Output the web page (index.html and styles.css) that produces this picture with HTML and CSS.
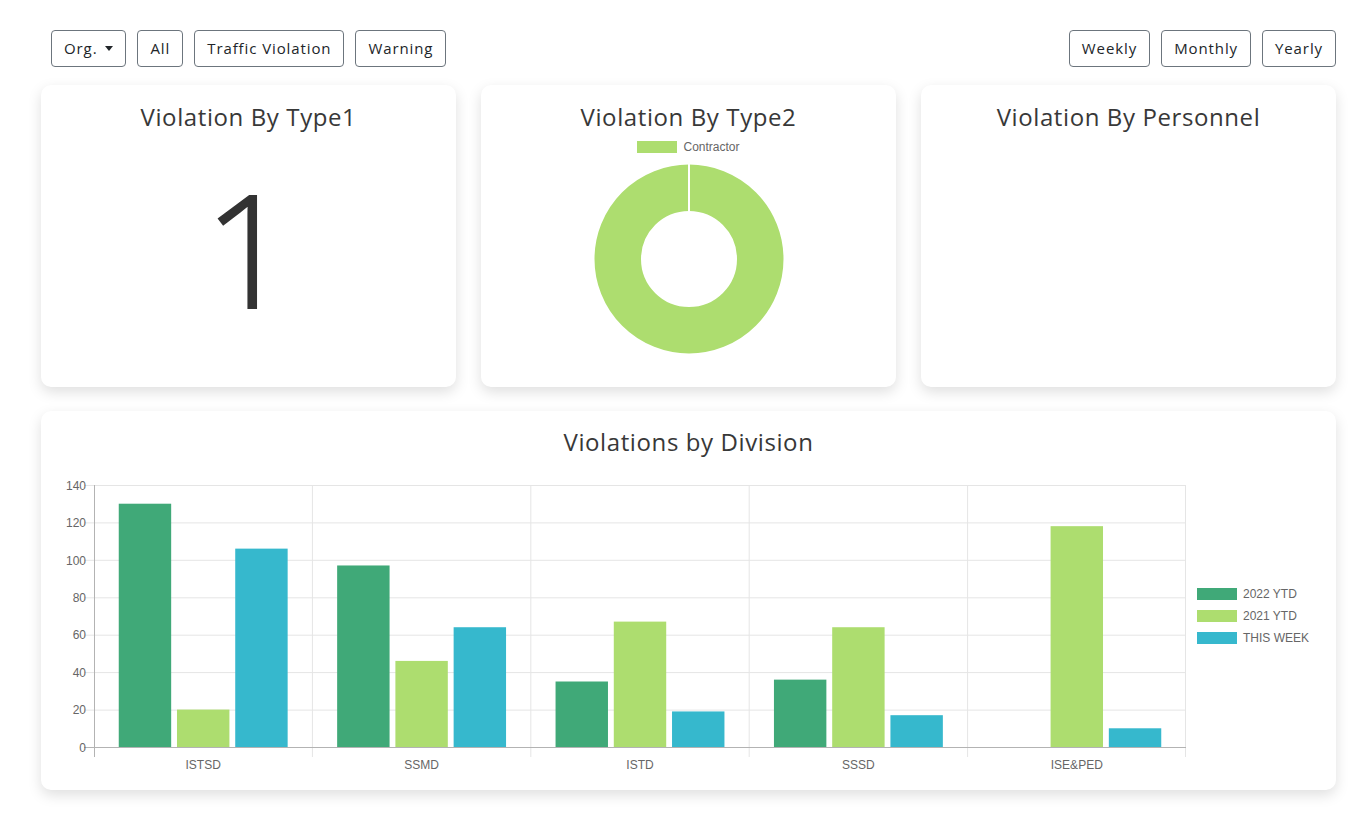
FILE: index.html
```html
<!DOCTYPE html>
<html lang="en">
<head>
<meta charset="utf-8">
<title>Violations Dashboard</title>
<link rel="stylesheet" href="styles.css">
</head>
<body>
<div class="page">
  <div class="toolbar">
    <div class="btn-group">
      <button class="btn dropdown">Org.<span class="caret"></span></button>
      <button class="btn">All</button>
      <button class="btn">Traffic Violation</button>
      <button class="btn">Warning</button>
    </div>
    <div class="btn-group">
      <button class="btn">Weekly</button>
      <button class="btn">Monthly</button>
      <button class="btn">Yearly</button>
    </div>
  </div>

  <div class="cards">
    <div class="card">
      <h2 class="card-title">Violation By Type1</h2>
      <div class="big-number">1</div>
    </div>
    <div class="card">
      <h2 class="card-title">Violation By Type2</h2>
      <div class="donut-legend"><span class="legend-box light"></span><span class="legend-text">Contractor</span></div>
      <svg class="donut" width="190" height="190" viewBox="0 0 190 190">
        <circle cx="95" cy="95" r="71.25" fill="none" stroke="#addd6f" stroke-width="46.5"/>
        <line x1="95" y1="0" x2="95" y2="48" stroke="#ffffff" stroke-width="2"/>
      </svg>
    </div>
    <div class="card">
      <h2 class="card-title">Violation By Personnel</h2>
    </div>
  </div>

  <div class="card wide">
    <h2 class="card-title">Violations by Division</h2>
    <svg class="bar-chart" width="1295" height="305" viewBox="0 0 1295 305">
      <g class="grid" stroke="#e5e5e5" stroke-width="1">
        <line x1="43" y1="15.5" x2="1145" y2="15.5"/>
        <line x1="43" y1="52.9" x2="1145" y2="52.9"/>
        <line x1="43" y1="90.3" x2="1145" y2="90.3"/>
        <line x1="43" y1="127.8" x2="1145" y2="127.8"/>
        <line x1="43" y1="165.2" x2="1145" y2="165.2"/>
        <line x1="43" y1="202.6" x2="1145" y2="202.6"/>
        <line x1="43" y1="240.1" x2="1145" y2="240.1"/>
        <line x1="271.4" y1="15" x2="271.4" y2="287"/>
        <line x1="489.8" y1="15" x2="489.8" y2="287"/>
        <line x1="708.2" y1="15" x2="708.2" y2="287"/>
        <line x1="926.6" y1="15" x2="926.6" y2="287"/>
        <line x1="1144.5" y1="15" x2="1144.5" y2="287"/>
      </g>
      <g class="bars">
        <rect x="77.75" y="33.71" width="52.42" height="243.29" fill="#40a978"/>
        <rect x="135.99" y="239.57" width="52.42" height="37.43" fill="#addd6f"/>
        <rect x="194.23" y="78.63" width="52.42" height="198.37" fill="#36b8cd"/>
        <rect x="296.15" y="95.47" width="52.42" height="181.53" fill="#40a978"/>
        <rect x="354.39" y="190.91" width="52.42" height="86.09" fill="#addd6f"/>
        <rect x="412.63" y="157.23" width="52.42" height="119.77" fill="#36b8cd"/>
        <rect x="514.55" y="211.5" width="52.42" height="65.5" fill="#40a978"/>
        <rect x="572.79" y="151.61" width="52.42" height="125.39" fill="#addd6f"/>
        <rect x="631.03" y="241.44" width="52.42" height="35.56" fill="#36b8cd"/>
        <rect x="732.95" y="209.63" width="52.42" height="67.37" fill="#40a978"/>
        <rect x="791.19" y="157.23" width="52.42" height="119.77" fill="#addd6f"/>
        <rect x="849.43" y="245.19" width="52.42" height="31.81" fill="#36b8cd"/>
        <rect x="1009.59" y="56.17" width="52.42" height="220.83" fill="#addd6f"/>
        <rect x="1067.83" y="258.29" width="52.42" height="18.71" fill="#36b8cd"/>
      </g>
      <g class="axes" stroke="#b3b3b3" stroke-width="1">
        <line x1="53.5" y1="15" x2="53.5" y2="287"/>
        <line x1="43" y1="277.5" x2="1145" y2="277.5"/>
      </g>
      <g class="ylabels" text-anchor="end">
        <text x="45" y="20">140</text>
        <text x="45" y="57">120</text>
        <text x="45" y="95">100</text>
        <text x="45" y="132">80</text>
        <text x="45" y="169">60</text>
        <text x="45" y="207">40</text>
        <text x="45" y="244">20</text>
        <text x="45" y="282">0</text>
      </g>
      <g class="xlabels" text-anchor="middle">
        <text x="162.2" y="299">ISTSD</text>
        <text x="380.6" y="299">SSMD</text>
        <text x="599" y="299">ISTD</text>
        <text x="817.4" y="299">SSSD</text>
        <text x="1035.8" y="299">ISE&amp;PED</text>
      </g>
      <g class="legend">
        <rect x="1156" y="118" width="40" height="12" fill="#40a978"/>
        <text x="1202" y="128">2022 YTD</text>
        <rect x="1156" y="140" width="40" height="12" fill="#addd6f"/>
        <text x="1202" y="150">2021 YTD</text>
        <rect x="1156" y="162" width="40" height="12" fill="#36b8cd"/>
        <text x="1202" y="172">THIS WEEK</text>
      </g>
    </svg>
  </div>
</div>
</body>
</html>
```

FILE: styles.css
```css
* { box-sizing: border-box; }

body {
  margin: 0;
  background: #ffffff;
  font-family: "Open Sans", "Noto Sans", sans-serif;
  color: #333333;
}

.page {
  padding: 30px 34px 20px 41px;
}

.toolbar {
  display: flex;
  justify-content: space-between;
  align-items: center;
  padding-left: 10px;
  margin-bottom: 18px;
}

.btn-group {
  display: flex;
  gap: 11px;
}

.btn {
  font-family: "Open Sans", "Noto Sans", sans-serif;
  font-size: 15px;
  line-height: 23px;
  letter-spacing: 0.9px;
  color: #212529;
  background: #ffffff;
  border: 1px solid #6c757d;
  border-radius: 4px;
  padding: 6px 12px;
  display: flex;
  align-items: center;
}

.caret {
  display: inline-block;
  margin-left: 8px;
  border-top: 5px solid #212529;
  border-left: 4px solid transparent;
  border-right: 4px solid transparent;
}

.cards {
  display: grid;
  grid-template-columns: repeat(3, 1fr);
  gap: 25px;
  margin-bottom: 24px;
}

.card {
  background: #ffffff;
  border-radius: 10px;
  box-shadow: 0 5px 14px rgba(0, 0, 0, 0.13);
  height: 302px;
  padding-top: 17px;
  display: flex;
  flex-direction: column;
  align-items: center;
}

.card.wide {
  height: 379px;
  padding-top: 16px;
  align-items: stretch;
}

.card-title {
  margin: 0;
  font-weight: 400;
  font-size: 24px;
  line-height: 29px;
  letter-spacing: 0.6px;
  color: #383838;
  text-align: center;
}

.big-number {
  font-family: "Open Sans", sans-serif;
  font-weight: 300;
  font-size: 157px;
  line-height: 1;
  color: #333333;
  margin-top: 38px;
  -webkit-text-stroke: 2px #333333;
}

.donut-legend {
  display: flex;
  align-items: center;
  gap: 6px;
  margin-top: 10px;
  height: 12px;
}

.legend-box {
  width: 40px;
  height: 12px;
}

.legend-box.light { background: #addd6f; }

.legend-text {
  font-family: "Liberation Sans", Arial, sans-serif;
  font-size: 12px;
  color: #666666;
}

.donut {
  margin-top: 11px;
}

.bar-chart {
  display: block;
  margin-top: 14px;
  font-family: "Liberation Sans", Arial, sans-serif;
  font-size: 12px;
  fill: #666666;
}
```
